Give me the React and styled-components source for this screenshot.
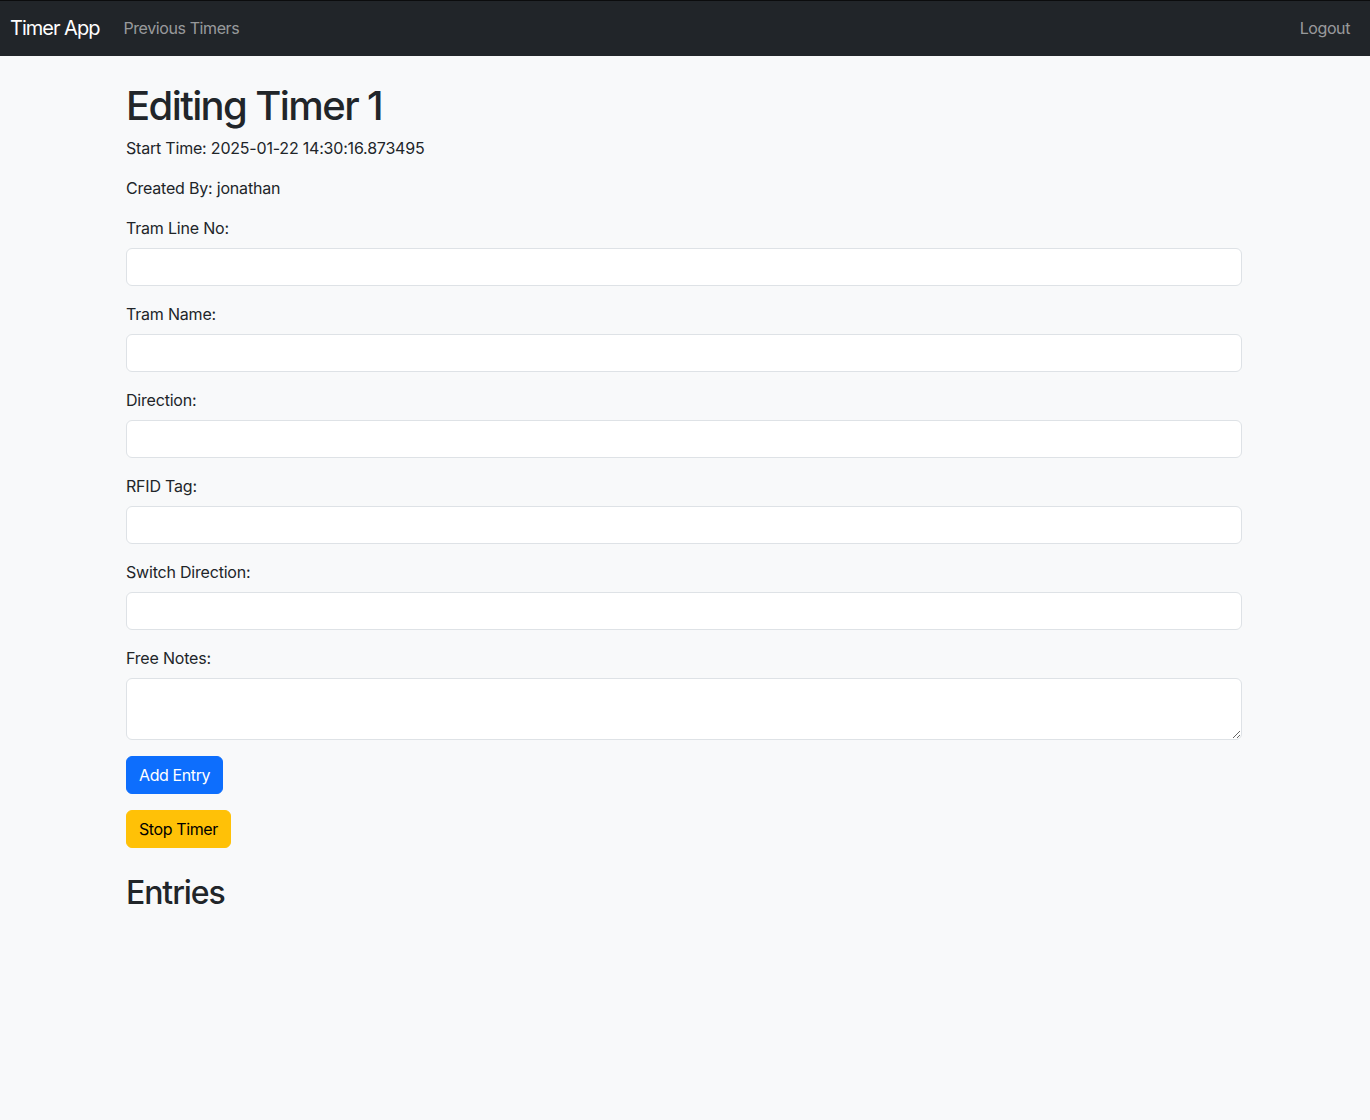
import React from "react";
import styled, { createGlobalStyle } from "styled-components";

const GlobalStyle = createGlobalStyle`
  *, *::before, *::after { box-sizing: border-box; }
  html, body { margin: 0; padding: 0; }
  body {
    background: #f8f9fa;
    color: #212529;
    font-family: Inter, "Noto Sans", "Liberation Sans", sans-serif;
    font-size: 16px;
    line-height: 1.5;
    letter-spacing: -0.2px;
    min-height: 1120px;
  }
`;

const Navbar = styled.nav`
  background: #212529;
  border-top: 1px solid #0b0c0d;
  height: 56px;
  display: flex;
  align-items: center;
  padding: 0 12px 2px 10px;
`;

const Brand = styled.a`
  color: #fff;
  font-size: 20px;
  margin-right: 16px;
  text-decoration: none;
  letter-spacing: -1px;
`;

const NavLink = styled.a`
  color: rgba(255, 255, 255, 0.55);
  padding: 8px;
  text-decoration: none;
  font-size: 16px;
  letter-spacing: -0.4px;
  margin-left: ${(p) => (p.$right ? "auto" : "0")};
`;

const Container = styled.main`
  max-width: 1140px;
  margin: 24px auto 0;
  padding: 0 13px 0 11px;
`;

const Title = styled.h1`
  font-size: 40px;
  font-weight: 500;
  line-height: 1.2;
  margin: 0 0 8px;
  padding-top: 2px;
  height: 48px;
  letter-spacing: -1.6px;
`;

const Sub = styled.h2`
  font-size: 32px;
  font-weight: 500;
  line-height: 1.2;
  margin: 24px 0 8px;
  padding-top: 2px;
  letter-spacing: -1.1px;
`;

const Text = styled.p`
  margin: 0 0 16px;
`;

const Field = styled.div`
  margin-bottom: 16px;
`;

const Label = styled.label`
  display: block;
  margin-bottom: 8px;
`;

const Input = styled.input`
  display: block;
  width: 100%;
  height: 38px;
  padding: 6px 12px;
  font: inherit;
  background: #fff;
  border: 1px solid #dee2e6;
  border-radius: 6px;
  outline: none;
`;

const TextArea = styled.textarea`
  display: block;
  width: 100%;
  height: 62px;
  padding: 6px 12px;
  font: inherit;
  background: #fff;
  border: 1px solid #dee2e6;
  border-radius: 6px;
  outline: none;
  resize: vertical;
`;

const Button = styled.button`
  display: block;
  height: 38px;
  padding: 6px 12px;
  font: inherit;
  letter-spacing: -0.4px;
  border: 1px solid ${(p) => p.$bg};
  background: ${(p) => p.$bg};
  color: ${(p) => p.$fg};
  border-radius: 6px;
  margin-bottom: 16px;
  cursor: pointer;
`;

const fields = [
  "Tram Line No:",
  "Tram Name:",
  "Direction:",
  "RFID Tag:",
  "Switch Direction:",
];

export default function App() {
  return (
    <>
      <GlobalStyle />
      <Navbar>
        <Brand href="#">Timer App</Brand>
        <NavLink href="#">Previous Timers</NavLink>
        <NavLink href="#" $right>
          Logout
        </NavLink>
      </Navbar>
      <Container>
        <Title>Editing Timer 1</Title>
        <Text>Start Time: 2025-01-22 14:30:16.873495</Text>
        <Text>Created By: jonathan</Text>
        <form onSubmit={(e) => e.preventDefault()}>
          {fields.map((f) => (
            <Field key={f}>
              <Label>{f}</Label>
              <Input type="text" />
            </Field>
          ))}
          <Field>
            <Label>Free Notes:</Label>
            <TextArea rows={2} />
          </Field>
          <Button type="submit" $bg="#0d6efd" $fg="#fff">
            Add Entry
          </Button>
        </form>
        <Button $bg="#ffc107" $fg="#000">
          Stop Timer
        </Button>
        <Sub>Entries</Sub>
      </Container>
    </>
  );
}
